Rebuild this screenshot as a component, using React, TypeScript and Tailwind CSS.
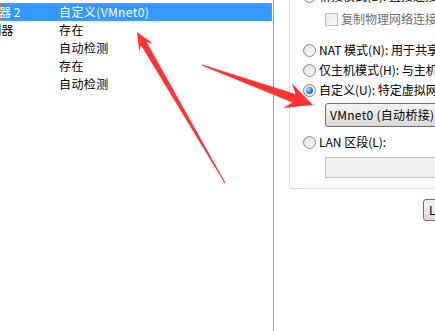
import React from "react";

type Pt = [number, number];

function arrowPoints(T: Pt, P: Pt, w0: number, w1: number, L: number, H: number, back: number) {
  const dx = P[0] - T[0];
  const dy = P[1] - T[1];
  const len = Math.hypot(dx, dy);
  const ux = dx / len;
  const uy = dy / len;
  const nx = -uy;
  const ny = ux;
  const N: Pt = [P[0] - ux * L * back, P[1] - uy * L * back];
  const B: Pt = [P[0] - ux * L, P[1] - uy * L];
  const pts: Pt[] = [
    [T[0] + nx * w0, T[1] + ny * w0],
    [N[0] + nx * w1, N[1] + ny * w1],
    [B[0] + nx * H, B[1] + ny * H],
    P,
    [B[0] - nx * H, B[1] - ny * H],
    [N[0] - nx * w1, N[1] - ny * w1],
    [T[0] - nx * w0, T[1] - ny * w0],
  ];
  return pts.map((p) => `${p[0].toFixed(1)},${p[1].toFixed(1)}`).join(" ");
}

const font = { fontFamily: '"Noto Sans CJK SC", "Noto Sans", sans-serif' };

function Radio({ checked = false }: { checked?: boolean }) {
  return (
    <div className="w-[13px] h-[13px] shrink-0 rounded-full border border-[#8a8a8a] bg-gradient-to-br from-[#d4d4d4] to-[#fbfbfb] flex items-center justify-center">
      <div className="w-[9px] h-[9px] rounded-full bg-gradient-to-br from-[#e6e6e6] to-[#f7f7f7] flex items-center justify-center">
        {checked && (
          <div className="w-[7px] h-[7px] rounded-full bg-[radial-gradient(circle_at_35%_35%,#aeeaff,#1b86d6_55%,#0b4f8f)]" />
        )}
      </div>
    </div>
  );
}

function Row({ left, right, selected = false }: { left: string; right: string; selected?: boolean }) {
  return (
    <div
      className={
        "h-[18px] flex items-center text-[12px] leading-none whitespace-nowrap " +
        (selected ? "bg-[#3399ff] text-white border border-dotted border-[#d88a3a]" : "text-black border border-transparent")
      }
    >
      <div className="w-[108px] shrink-0 ml-[-50px]">{left}</div>
      <div className="tracking-[0.4px]">{right}</div>
    </div>
  );
}

export default function App() {
  return (
    <div className="relative w-[435px] h-[331px] overflow-hidden bg-white flex" style={font}>
      {/* Left list */}
      <div className="w-[274px] h-full shrink-0 border-r border-[#a0a0a0] bg-white overflow-hidden">
        <div className="pt-[3px] w-[272px]">
          <Row left="网络适配器 2" right="自定义(VMnet0)" selected />
          <Row left="USB 控制器" right="存在" />
          <Row left="声卡" right="自动检测" />
          <Row left="打印机" right="存在" />
          <Row left="显示器" right="自动检测" />
        </div>
      </div>

      {/* Right panel */}
      <div className="flex-1 h-full bg-white text-[12px] leading-none text-black overflow-hidden">
        <div className="ml-[15px] mt-[-14px] w-[200px] border-l border-b border-[#d5dfe5] rounded-bl-[4px] pl-[13px] pb-[10px]">
          <div className="h-[20px] flex items-center whitespace-nowrap">
            <Radio />
            <span className="ml-[3px]">桥接模式(B): 直接连接物理网络</span>
          </div>
          <div className="mt-[3px] h-[20px] ml-[22px] flex items-center whitespace-nowrap">
            <div className="w-[13px] h-[13px] shrink-0 border border-[#b9b9b9] bg-gradient-to-br from-[#e9e9e9] to-[#f8f8f8]" />
            <span className="ml-[3px] text-[#6d6d6d]">复制物理网络连接状态(P)</span>
          </div>
          <div className="mt-[11px] h-[20px] flex items-center whitespace-nowrap">
            <Radio />
            <span className="ml-[3px]">NAT 模式(N): 用于共享主机的 IP 地址</span>
          </div>
          <div className="h-[20px] flex items-center whitespace-nowrap">
            <Radio />
            <span className="ml-[3px]">仅主机模式(H): 与主机共享的专用网络</span>
          </div>
          <div className="h-[20px] flex items-center whitespace-nowrap">
            <Radio checked />
            <span className="ml-[3px]">自定义(U): 特定虚拟网络</span>
          </div>
          <div className="mt-[3px] ml-[22px] h-[24px] w-[160px] rounded-[3px] border border-[#707070] bg-gradient-to-b from-[#f2f2f2] via-[#ebebeb] to-[#d9d9d9] flex items-center pl-[4px] whitespace-nowrap tracking-[0.3px]">
            VMnet0 (自动桥接)
          </div>
          <div className="mt-[5px] h-[20px] flex items-center whitespace-nowrap">
            <Radio />
            <span className="ml-[3px]">LAN 区段(L):</span>
          </div>
          <div className="mt-[5px] ml-[22px] h-[21px] w-[160px] border border-[#c5c5c5] bg-[#f0f0f0]" />
        </div>
        <div className="mt-[10px] ml-[149px] h-[22px] w-[80px] rounded-[3px] border border-[#707070] bg-gradient-to-b from-[#f2f2f2] via-[#ebebeb] to-[#d9d9d9] flex items-center pl-[5px] whitespace-nowrap">
          LAN 区段(S)...
        </div>
      </div>

      {/* Annotation arrows */}
      <svg className="absolute left-0 top-0 pointer-events-none" width={435} height={331}>
        <polygon points={arrowPoints([225, 183], [137, 32], 0.5, 3.2, 18, 8, 0.75)} fill="#ff3333" />
        <polygon points={arrowPoints([202, 65], [313, 105], 0.5, 4.5, 27, 13, 0.75)} fill="#ff3333" />
      </svg>
    </div>
  );
}
